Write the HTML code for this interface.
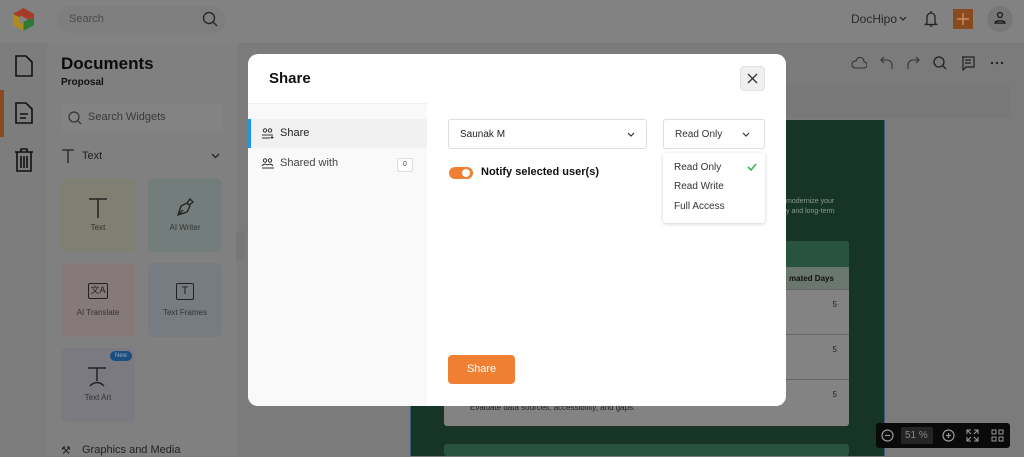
<!DOCTYPE html>
<html><head><meta charset="utf-8"><style>
*{box-sizing:border-box;margin:0;padding:0}
body{width:1024px;height:456px;overflow:hidden;font-family:"Liberation Sans",sans-serif;background:#7b7b7b;position:relative}
.a{position:absolute}
.ico{stroke:#111;fill:none;stroke-width:1.6}
</style></head><body>
<div class="a" style="left:0;top:0;width:1024px;height:43px;background:#828282"></div>
<svg class="a" style="left:11px;top:7px" width="25" height="25" viewBox="0 0 25 25"><path d="M12.5 1 L23 7 L23 18 L12.5 24 L2 18 L2 7Z" fill="#2e7a34"/><path d="M12.5 1 L23 7 L23 12 L2 12 L2 7Z" fill="#a83a2a"/><path d="M2 7 L12.5 12 L12.5 24 L2 18Z" fill="#b08a1c"/><path d="M9 8 L17 12.5 L9 17Z" fill="#828282"/></svg>
<div class="a" style="left:57px;top:6px;width:169px;height:27px;border-radius:14px;background:#7e7e7e;color:#4a4a4a;font-size:11px;padding:7px 12px">Search</div>
<svg class="a" style="left:202px;top:11px" width="16" height="16"><circle cx="7" cy="7" r="5.5" stroke="#2a2a2a" fill="none" stroke-width="1.4"/><path d="M11 11l4 4" stroke="#2a2a2a" stroke-width="1.4"/></svg>
<div class="a" style="left:851px;top:12px;font-size:12px;color:#2a2a2a">DocHipo</div>
<svg class="a" style="left:899px;top:16px" width="8" height="5"><path d="M1 1l3 3 3-3" stroke="#222" fill="none" stroke-width="1.2"/></svg>
<svg class="a" style="left:924px;top:10px" width="14" height="18"><path d="M3 13V7a4 4 0 018 0v6l1.5 1.5h-11z M7 1v2 M5.5 16h3" stroke="#222" fill="none" stroke-width="1.3"/></svg>
<div class="a" style="left:953px;top:9px;width:20px;height:20px;background:#8a4a20"></div>
<svg class="a" style="left:953px;top:9px" width="20" height="20"><path d="M10 4v12M4 10h12" stroke="#c98a5a" stroke-width="1.5"/></svg>
<div class="a" style="left:987px;top:6px;width:26px;height:26px;border-radius:13px;background:#777"></div>
<svg class="a" style="left:993px;top:11px" width="14" height="14"><circle cx="7" cy="4" r="2.5" stroke="#222" fill="none" stroke-width="1.4"/><path d="M2 12c0-3 10-3 10 0z" stroke="#222" fill="none" stroke-width="1.4"/></svg>
<div class="a" style="left:0;top:43px;width:47px;height:413px;background:#7d7d7d"></div>
<div class="a" style="left:0;top:90px;width:4px;height:47px;background:#8a4a20"></div>
<svg class="a" style="left:14px;top:55px" width="20" height="22"><path d="M2 1h10l6 6v14H2z" class="ico"/></svg>
<svg class="a" style="left:14px;top:102px" width="20" height="22"><path d="M2 1h10l6 6v14H2z M6 12h8 M6 16h6" class="ico"/></svg>
<svg class="a" style="left:14px;top:148px" width="20" height="24"><path d="M1 4h18 M7 4V1h6v3 M3 4v19h14V4 M7 8v12 M10 8v12 M13 8v12" class="ico"/></svg>
<div class="a" style="left:47px;top:43px;width:190px;height:413px;background:#808080"></div>
<div class="a" style="left:61px;top:54px;font-size:17px;font-weight:bold;color:#0c0c0c">Documents</div>
<div class="a" style="left:61px;top:77px;font-size:10px;font-weight:bold;color:#111">Proposal</div>
<div class="a" style="left:61px;top:103px;width:162px;height:29px;background:#838383;border-radius:3px;color:#3a3a3a;font-size:11px;padding:8px 0 0 27px">Search Widgets</div>
<svg class="a" style="left:68px;top:111px" width="14" height="14"><circle cx="6" cy="6" r="5" stroke="#333" fill="none" stroke-width="1.2"/><path d="M10 10l3 3" stroke="#333" stroke-width="1.2"/></svg>
<svg class="a" style="left:61px;top:149px" width="14" height="14"><path d="M1 1h12M7 1v13" stroke="#222" stroke-width="1.3"/></svg>
<div class="a" style="left:82px;top:150px;font-size:11px;color:#222">Text</div>
<svg class="a" style="left:211px;top:153px" width="9" height="6"><path d="M1 1l3.5 3.5L8 1" stroke="#222" fill="none" stroke-width="1.3"/></svg>
<div class="a" style="left:61px;top:178px;width:74px;height:74px;background:#7f7f72;border-radius:6px"></div>
<div class="a" style="left:148px;top:178px;width:74px;height:74px;background:#737d7b;border-radius:6px"></div>
<div class="a" style="left:61px;top:263px;width:74px;height:74px;background:#857a79;border-radius:6px"></div>
<div class="a" style="left:148px;top:263px;width:74px;height:74px;background:#767c82;border-radius:6px"></div>
<div class="a" style="left:61px;top:348px;width:74px;height:74px;background:#7a7a80;border-radius:6px"></div>
<svg class="a" style="left:88px;top:198px" width="20" height="20"><path d="M1 1h18M10 1v19" stroke="#222" stroke-width="1.5"/></svg>
<div class="a" style="left:61px;top:223px;width:74px;text-align:center;font-size:8px;color:#333">Text</div>
<svg class="a" style="left:175px;top:197px" width="20" height="20"><path d="M3 18l3-9 6-3 3 3-3 6-9 3z M3 18l5-5 M12 6l3-4 3 3-4 3" stroke="#222" fill="none" stroke-width="1.3"/></svg>
<div class="a" style="left:148px;top:223px;width:74px;text-align:center;font-size:8px;color:#333">AI Writer</div>
<div class="a" style="left:88px;top:283px;width:20px;height:16px;border:1.5px solid #222;border-radius:2px;font-size:9px;text-align:center;color:#222;font-family:'Liberation Sans','Noto Sans CJK SC',sans-serif;line-height:13px">文A</div>
<div class="a" style="left:61px;top:308px;width:74px;text-align:center;font-size:8px;color:#333">AI Translate</div>
<div class="a" style="left:176px;top:283px;width:18px;height:17px;border:1.5px solid #222;border-radius:2px;font-size:11px;text-align:center;color:#222;line-height:14px">T</div>
<div class="a" style="left:148px;top:308px;width:74px;text-align:center;font-size:8px;color:#333">Text Frames</div>
<div class="a" style="left:110px;top:351px;width:22px;height:10px;background:#1a4e80;border-radius:5px;color:#9ab;font-size:6px;text-align:center;line-height:10px">New</div>
<svg class="a" style="left:87px;top:367px" width="20" height="20"><path d="M1 1h18M10 1v13M3 19q7-7 14 0" stroke="#222" fill="none" stroke-width="1.5"/></svg>
<div class="a" style="left:61px;top:393px;width:74px;text-align:center;font-size:8px;color:#333">Text Art</div>
<div class="a" style="left:82px;top:444px;font-size:11px;color:#222">Graphics and Media</div>
<div class="a" style="left:61px;top:444px;font-size:11px;color:#222">⚒</div>
<div class="a" style="left:236px;top:231px;width:9px;height:30px;background:#777;border-radius:2px"></div>
<svg class="a" style="left:851px;top:57px" width="16" height="12"><path d="M4 11h9a3 3 0 000-6 4 4 0 00-8-1 3.5 3.5 0 00-1 7z" stroke="#333" fill="none" stroke-width="1.1"/></svg>
<svg class="a" style="left:880px;top:56px" width="14" height="14"><path d="M4 1L1 4l3 3M1 4h6a5 5 0 015 5v4" stroke="#333" fill="none" stroke-width="1.1"/></svg>
<svg class="a" style="left:906px;top:56px" width="14" height="14"><path d="M10 1l3 3-3 3M13 4H7a5 5 0 00-5 5v4" stroke="#333" fill="none" stroke-width="1.1"/></svg>
<svg class="a" style="left:933px;top:56px" width="14" height="14"><circle cx="6" cy="6" r="5" stroke="#222" fill="none" stroke-width="1.3"/><path d="M10 10l3 3" stroke="#222" stroke-width="1.3"/></svg>
<svg class="a" style="left:961px;top:56px" width="14" height="15"><path d="M1 1h12v10H5l-3 3V1 M4 4h6 M4 7h6" stroke="#222" fill="none" stroke-width="1.2"/></svg>
<svg class="a" style="left:990px;top:61px" width="14" height="4"><circle cx="2" cy="2" r="1.2" fill="#222"/><circle cx="7" cy="2" r="1.2" fill="#222"/><circle cx="12" cy="2" r="1.2" fill="#222"/></svg>
<div class="a" style="left:786px;top:84px;width:224px;height:34px;background:#787878;border-radius:4px"></div>
<div class="a" style="left:410px;top:120px;width:475px;height:336px;background:#173526;border-left:1px solid #3b5f7a;border-right:1px solid #3b5f7a"></div>
<div class="a" style="left:786px;top:197px;font-size:7px;color:#8b9a92;line-height:10px">modernize your<br>y and long-term</div>
<div class="a" style="left:444px;top:241px;width:405px;height:185px;background:#838383;border-radius:3px;overflow:hidden">
 <div style="height:26px;background:#27533f"></div>
 <div style="height:23px;background:#6a776e;border-bottom:1px solid #666;font-size:8px;font-weight:bold;color:#111;padding:7px 0 0 345px">mated Days</div>
 <div style="height:45px;border-bottom:1px solid #666;font-size:8px;color:#222;text-align:right;padding:10px 12px">5</div>
 <div style="height:45px;border-bottom:1px solid #666;font-size:8px;color:#222;text-align:right;padding:10px 12px">5</div>
 <div style="height:45px;font-size:8px;color:#222;padding:10px 12px"><div style="text-align:right">5</div><div style="margin-top:4px;padding-left:14px">Evaluate data sources, accessibility, and gaps.</div></div>
</div>
<div class="a" style="left:444px;top:444px;width:405px;height:12px;background:#27533f;border-radius:3px"></div>
<div class="a" style="left:876px;top:423px;width:134px;height:25px;background:#0a0a0a;border-radius:3px"></div>
<div class="a" style="left:901px;top:427px;width:32px;height:17px;background:#252525;border-radius:2px;color:#888;font-size:10px;padding:3px 4px;white-space:nowrap">51 %</div>
<svg class="a" style="left:881px;top:429px" width="13" height="13"><circle cx="6.5" cy="6.5" r="5.5" stroke="#999" fill="none" stroke-width="1.2"/><path d="M4 6.5h5" stroke="#999" stroke-width="1.2"/></svg>
<svg class="a" style="left:942px;top:429px" width="13" height="13"><circle cx="6.5" cy="6.5" r="5.5" stroke="#999" fill="none" stroke-width="1.2"/><path d="M4 6.5h5M6.5 4v5" stroke="#999" stroke-width="1.2"/></svg>
<svg class="a" style="left:966px;top:429px" width="13" height="13"><path d="M1 5V1h4M8 1h4v4M12 8v4H8M5 12H1V8M1 1l4 4M12 1L8 5M12 12L8 8M1 12l4-4" stroke="#999" fill="none" stroke-width="1.1"/></svg>
<svg class="a" style="left:991px;top:429px" width="13" height="13"><rect x="1" y="1" width="4" height="4" stroke="#999" fill="none"/><rect x="8" y="1" width="4" height="4" stroke="#999" fill="none"/><rect x="1" y="8" width="4" height="4" stroke="#999" fill="none"/><rect x="8" y="8" width="4" height="4" stroke="#999" fill="none"/></svg>
<div class="a" style="left:248px;top:54px;width:538px;height:352px;background:#fff;border-radius:10px;overflow:hidden">
 <div class="a" style="left:21px;top:16px;font-size:15px;font-weight:bold;color:#111">Share</div>
 <div class="a" style="left:492px;top:12px;width:25px;height:25px;background:#efefef;border-radius:4px;border:1px solid #e2e2e2"></div>
 <svg class="a" style="left:499px;top:19px" width="11" height="11"><path d="M1 1l9 9M10 1l-9 9" stroke="#333" stroke-width="1.3"/></svg>
 <div class="a" style="left:0;top:49px;width:179px;height:303px;background:#f9f9f9;border-top:1px solid #f0f0f0"></div>
 <div class="a" style="left:0;top:65px;width:179px;height:29px;background:#f0f0f0;border-left:3px solid #1e96e6"></div>
 <svg class="a" style="left:13px;top:74px" width="14" height="11"><circle cx="4" cy="2.5" r="1.7" stroke="#333" fill="none"/><circle cx="9" cy="2.5" r="1.7" stroke="#333" fill="none"/><path d="M1 7h11M1 10h8M11 8v3M9.5 9.5h3" stroke="#333" fill="none"/></svg>
 <div class="a" style="left:32px;top:73px;font-size:11px;color:#222">Share</div>
 <svg class="a" style="left:13px;top:104px" width="14" height="11"><circle cx="4" cy="2.5" r="1.7" stroke="#333" fill="none"/><circle cx="9" cy="2.5" r="1.7" stroke="#333" fill="none"/><path d="M1 8q2-3 5.5-1 3.5-2 5.5 1M1 10h12" stroke="#333" fill="none"/></svg>
 <div class="a" style="left:32px;top:103px;font-size:11px;color:#444">Shared with</div>
 <div class="a" style="left:149px;top:104px;width:16px;height:14px;border:1px solid #ddd;border-radius:2px;font-size:7px;text-align:center;line-height:12px;color:#444;background:#fff">0</div>
 <div class="a" style="left:200px;top:65px;width:199px;height:30px;border:1px solid #ddd;border-radius:3px;font-size:10px;color:#222;padding:9px 0 0 11px">Saunak M</div>
 <svg class="a" style="left:379px;top:78px" width="8" height="5"><path d="M1 1l3 3 3-3" stroke="#333" fill="none" stroke-width="1.2"/></svg>
 <div class="a" style="left:415px;top:65px;width:102px;height:30px;border:1px solid #ddd;border-radius:3px;font-size:10px;color:#333;padding:9px 0 0 11px">Read Only</div>
 <svg class="a" style="left:494px;top:78px" width="8" height="5"><path d="M1 1l3 3 3-3" stroke="#333" fill="none" stroke-width="1.2"/></svg>
 <div class="a" style="left:201px;top:113px;width:24px;height:12px;border-radius:6px;background:#ef7f32"></div>
 <div class="a" style="left:214px;top:115px;width:8px;height:8px;border-radius:4px;background:#fff"></div>
 <div class="a" style="left:233px;top:112px;font-size:11px;font-weight:bold;color:#111">Notify selected user(s)</div>
 <div class="a" style="left:415px;top:99px;width:102px;height:70px;background:#fff;border-radius:3px;box-shadow:0 1px 4px rgba(0,0,0,.18);font-size:10px;color:#333">
  <div style="position:absolute;left:11px;top:9px">Read Only</div>
  <svg style="position:absolute;right:8px;top:10px" width="10" height="8"><path d="M1 4l3 3 5-6" stroke="#3bb54a" fill="none" stroke-width="1.6"/></svg>
  <div style="position:absolute;left:11px;top:28px">Read Write</div>
  <div style="position:absolute;left:11px;top:48px">Full Access</div>
 </div>
 <div class="a" style="left:200px;top:301px;width:67px;height:29px;background:#ef7f32;border-radius:4px;color:#fff;font-size:11px;text-align:center;line-height:29px">Share</div>
</div>
</body></html>
